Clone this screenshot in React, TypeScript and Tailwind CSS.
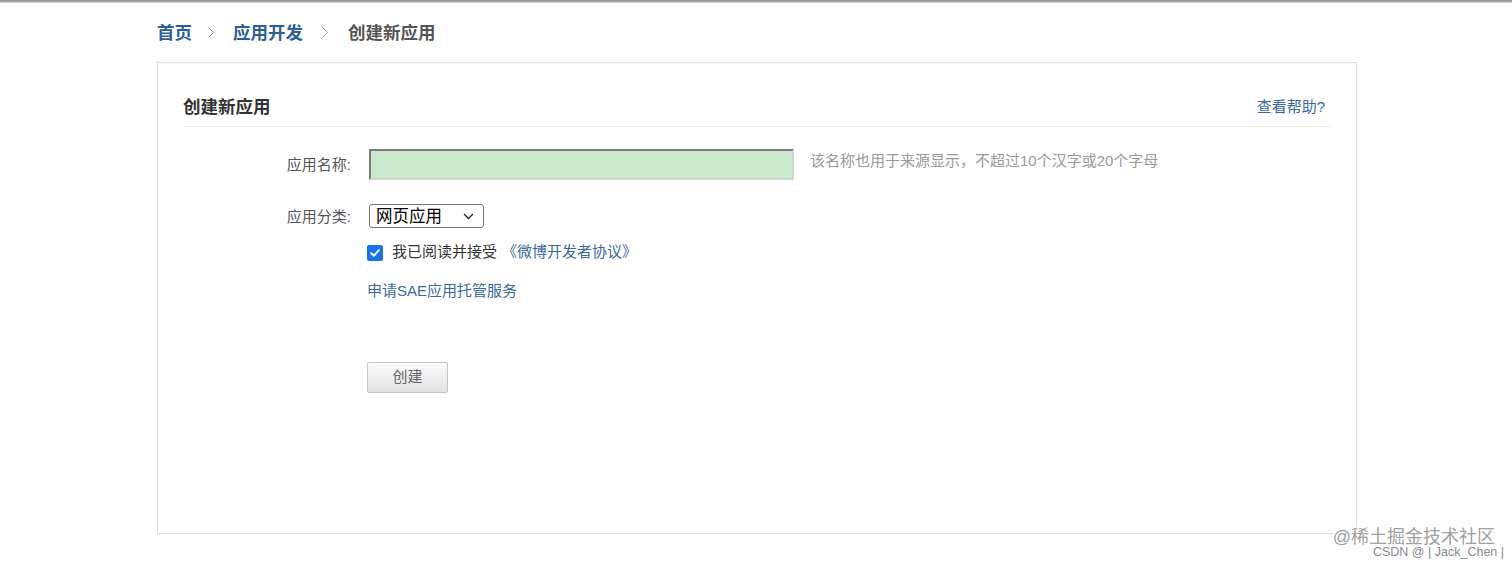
import React from "react";

const FONT = { fontFamily: '"Liberation Sans", "Noto Sans CJK SC", sans-serif' };

export default function App() {
  return (
    <div className="relative w-[1512px] h-[564px] bg-white overflow-hidden" style={FONT}>
      <div className="h-[3px] bg-gradient-to-b from-[#8a8a8a] to-[#d8d8d8]" />
      <div className="ml-[157px] w-[1200px]">
        <div className="h-[59px] flex items-center text-[17.5px] font-bold leading-[24px]">
          <span className="text-[#2d5f96]">首页</span>
          <svg width="6" height="11" viewBox="0 0 6 11" className="ml-[16px] mr-[19px]">
            <path d="M0.5 0.5 L5.5 5.5 L0.5 10.5" fill="none" stroke="#9a9a9a" strokeWidth="1" />
          </svg>
          <span className="text-[#2d5f96]">应用开发</span>
          <svg width="6" height="11" viewBox="0 0 6 11" className="ml-[19px] mr-[20px]">
            <path d="M0.5 0.5 L5.5 5.5 L0.5 10.5" fill="none" stroke="#9a9a9a" strokeWidth="1" />
          </svg>
          <span className="text-[#555555]">创建新应用</span>
        </div>
        <div className="h-[472px] border border-[#dcdcdc] px-[25px] pt-[32px]">
          <div className="flex items-center justify-between border-b border-[#eeeeee] pb-[7px]">
            <span className="text-[17.5px] font-bold leading-[24px] text-[#333333]">创建新应用</span>
            <a className="text-[15px] leading-[24px] text-[#3a6a9c] mr-[6px]">查看帮助?</a>
          </div>

          <div className="flex items-center mt-[22px]">
            <div className="w-[168px] text-right text-[15px] text-[#555555] pt-[2px]">应用名称:</div>
            <div className="ml-[18px] w-[425px] h-[31px] bg-[#cce8cf] border-2 border-t-[#7a7a7a] border-l-[#7a7a7a] border-r-[#c9d9cb] border-b-[#c9d9cb]" />
            <span className="ml-[16px] text-[15px] text-[#999999] mb-[6px]">该名称也用于来源显示，不超过10个汉字或20个字母</span>
          </div>

          <div className="flex items-center mt-[24px]">
            <div className="w-[168px] text-right text-[15px] text-[#555555] pt-[2px]">应用分类:</div>
            <div className="relative ml-[18px] w-[115px] h-[24px]">
              <select className="appearance-none w-full h-full border border-[#767676] rounded-[3px] pl-[6px] text-[16.5px] leading-[20px] text-black bg-white">
                <option>网页应用</option>
              </select>
              <svg width="11" height="7" viewBox="0 0 11 7" className="absolute right-[10px] top-[9px] pointer-events-none">
                <path d="M1 1 L5.5 5.5 L10 1" fill="none" stroke="#222222" strokeWidth="1.4" />
              </svg>
            </div>
          </div>

          <div className="flex items-center mt-[14px] ml-[184px] h-[20px]">
            <span className="w-[16px] h-[16px] rounded-[2px] bg-[#1a73e8] flex items-center justify-center">
              <svg width="12" height="12" viewBox="0 0 12 12">
                <path d="M2.2 6.2 L4.8 8.8 L9.8 3.2" fill="none" stroke="white" strokeWidth="2" strokeLinecap="round" strokeLinejoin="round" />
              </svg>
            </span>
            <span className="ml-[9px] text-[15px] text-[#333333]">我已阅读并接受</span>
            <a className="ml-[5px] text-[15px] text-[#3a6a9c]">《微博开发者协议》</a>
          </div>

          <div className="mt-[18px] ml-[184px] h-[20px] leading-[20px]">
            <a className="text-[15px] text-[#3a6a9c]">申请SAE应用托管服务</a>
          </div>

          <div className="mt-[61px] ml-[184px]">
            <button className="w-[81px] h-[31px] border border-[#c4c4c4] rounded-[2px] bg-gradient-to-b from-[#fbfbfb] to-[#e3e3e3] text-[15px] text-[#666666]">
              创建
            </button>
          </div>
        </div>
      </div>

      <div className="absolute right-[17px] top-[526px] text-[18px] leading-[22px] text-[#a0a0a0] bg-white/70">@稀土掘金技术社区</div>
      <div className="absolute right-[8px] top-[545px] text-[12.5px] leading-[14px] text-[#8a8a8a]" style={{ fontFamily: '"Liberation Sans", sans-serif' }}>CSDN @ | Jack_Chen |</div>
    </div>
  );
}
